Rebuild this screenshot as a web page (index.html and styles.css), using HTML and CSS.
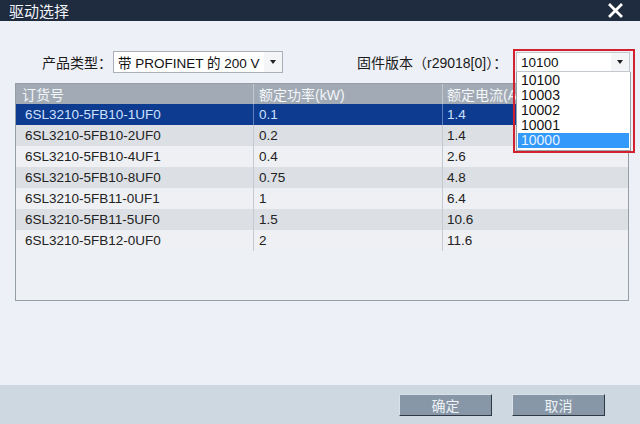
FILE: index.html
```html
<!DOCTYPE html>
<html lang="zh-CN">
<head>
  <meta charset="UTF-8">
  <meta name="viewport" content="width=device-width, initial-scale=1.0">
  <title>驱动选择</title>
  <link rel="stylesheet" href="styles.css">
</head>
<body>
  <div class="dialog">
    <div class="titlebar">
      <span class="title">驱动选择</span>
      <svg class="close" width="15" height="15" viewBox="0 0 15 15">
        <path d="M2 2 L13 13 M13 2 L2 13" stroke="#fff" stroke-width="2.8" stroke-linecap="square"/>
      </svg>
    </div>
    <div class="main">
      <div class="filters">
        <span class="label type-label">产品类型：</span>
        <div class="select type-select">
          <span>带 PROFINET 的 200 V</span>
          <span class="arrow"></span>
        </div>
        <span class="label fw-label">固件版本（r29018[0]）：</span>
        <div class="fw-box">
          <div class="select fw-select">
            <span>10100</span>
            <span class="arrow"></span>
          </div>
          <div class="dropdown">
            <div class="opt">10100</div>
            <div class="opt">10003</div>
            <div class="opt">10002</div>
            <div class="opt">10001</div>
            <div class="opt picked">10000</div>
          </div>
          <div class="redframe"></div>
        </div>
      </div>
      <div class="grid">
        <div class="row head">
          <div class="cell c1">订货号</div>
          <div class="cell c2">额定功率(kW)</div>
          <div class="cell c3">额定电流(A)</div>
        </div>
        <div class="row sel">
          <div class="cell c1">6SL3210-5FB10-1UF0</div>
          <div class="cell c2">0.1</div>
          <div class="cell c3">1.4</div>
        </div>
        <div class="row dark">
          <div class="cell c1">6SL3210-5FB10-2UF0</div>
          <div class="cell c2">0.2</div>
          <div class="cell c3">1.4</div>
        </div>
        <div class="row">
          <div class="cell c1">6SL3210-5FB10-4UF1</div>
          <div class="cell c2">0.4</div>
          <div class="cell c3">2.6</div>
        </div>
        <div class="row dark">
          <div class="cell c1">6SL3210-5FB10-8UF0</div>
          <div class="cell c2">0.75</div>
          <div class="cell c3">4.8</div>
        </div>
        <div class="row">
          <div class="cell c1">6SL3210-5FB11-0UF1</div>
          <div class="cell c2">1</div>
          <div class="cell c3">6.4</div>
        </div>
        <div class="row dark">
          <div class="cell c1">6SL3210-5FB11-5UF0</div>
          <div class="cell c2">1.5</div>
          <div class="cell c3">10.6</div>
        </div>
        <div class="row">
          <div class="cell c1">6SL3210-5FB12-0UF0</div>
          <div class="cell c2">2</div>
          <div class="cell c3">11.6</div>
        </div>
      </div>
    </div>
    <div class="footer">
      <button class="btn">确定</button>
      <button class="btn">取消</button>
    </div>
  </div>
</body>
</html>
```

FILE: styles.css
```css
body {
  margin: 0px;
  background-color: #edf0f6;
  font-family: "Liberation Sans", "Noto Sans CJK SC", sans-serif;
}
.dialog {
  width: 640px;
  height: 424px;
  display: flex;
  flex-direction: column;
}
.titlebar {
  height: 21px;
  background-color: #1f2b3f;
  display: flex;
  align-items: center;
  justify-content: space-between;
  padding: 0 17px 0 9px;
  box-sizing: border-box;
}
.title {
  color: #f2f4f8;
  font-size: 15px;
}
.main {
  height: 364px;
  box-sizing: border-box;
  padding-top: 31px;
}
.filters {
  display: flex;
  align-items: center;
  height: 20px;
  padding-left: 42px;
  margin-bottom: 11px;
}
.label {
  font-size: 14px;
  color: #1a1a1a;
}
.type-label {
  width: 71px;
}
.fw-label {
  margin-left: 74px;
  width: 159px;
}
.select {
  height: 22px;
  box-sizing: border-box;
  background-color: #fff;
  border: 1px solid #a9b0b8;
  display: flex;
  align-items: center;
  justify-content: space-between;
  font-size: 13.5px;
  color: #111;
  padding-left: 4px;
}
.type-select {
  width: 170px;
}
.arrow {
  width: 18px;
  height: 100%;
  background-color: #f4f5f7;
  display: flex;
  align-items: center;
  justify-content: center;
}
.arrow::after {
  content: "";
  border-left: 3px solid transparent;
  border-right: 3px solid transparent;
  border-top: 4px solid #222;
}
.fw-box {
  position: relative;
  width: 114px;
}
.fw-select {
  width: 114px;
  height: 20px;
  border-color: #c4c9d0;
}
.dropdown {
  position: absolute;
  top: 20px;
  left: 0;
  width: 115px;
  background-color: #fff;
  border: 1px solid #9aa2aa;
  border-top: none;
  box-sizing: border-box;
  padding: 1px 1px 2px 1px;
  z-index: 2;
}
.opt {
  height: 15px;
  line-height: 15px;
  font-size: 14px;
  color: #111;
  padding-left: 3px;
}
.opt.picked {
  background-color: #3399fa;
  color: #e8f2ff;
}
.redframe {
  position: absolute;
  top: -3px;
  left: -3px;
  width: 122px;
  height: 104px;
  border: 2px solid #d3202f;
  box-sizing: border-box;
  z-index: 3;
}
.grid {
  margin-left: 15px;
  width: 614px;
  height: 218px;
  box-sizing: border-box;
  border: 1px solid #959da6;
  background-color: #edf0f5;
}
.row {
  display: flex;
  height: 21px;
  background-color: #eef0f4;
  font-size: 13.5px;
  color: #222;
}
.row.dark {
  background-color: #dcdfe4;
}
.row.head {
  height: 20px;
  background-color: #a2abb5;
  color: #f4f6f9;
  font-size: 14px;
}
.row.sel {
  background-color: #0c3b8f;
  color: #cfe0ff;
}
.cell {
  display: flex;
  align-items: center;
  box-sizing: border-box;
  white-space: nowrap;
  overflow: hidden;
  border-right: 1px solid #c6cad0;
}
.head .cell {
  border-right-color: #c2c8cf;
}
.sel .cell {
  border-right-color: #5f7fbf;
}
.c1 {
  width: 238px;
  padding-left: 9px;
}
.head .c1 {
  padding-left: 6px;
}
.c2 {
  width: 189px;
  padding-left: 5px;
}
.c3 {
  flex: 1;
  padding-left: 4px;
  border-right: none;
}
.footer {
  flex: 1;
  background-color: #cdd8e1;
  display: flex;
  justify-content: flex-end;
  align-items: flex-start;
  gap: 20px;
  padding: 9px 35px 0 0;
}
.btn {
  width: 93px;
  height: 22px;
  background-color: #8797a7;
  border: 1px solid;
  border-color: #d9e0e7 #2e3944 #2e3944 #d9e0e7;
  color: #eef2f6;
  font-family: "Liberation Sans", "Noto Sans CJK SC", sans-serif;
  font-size: 14px;
  padding: 0;
}
```
